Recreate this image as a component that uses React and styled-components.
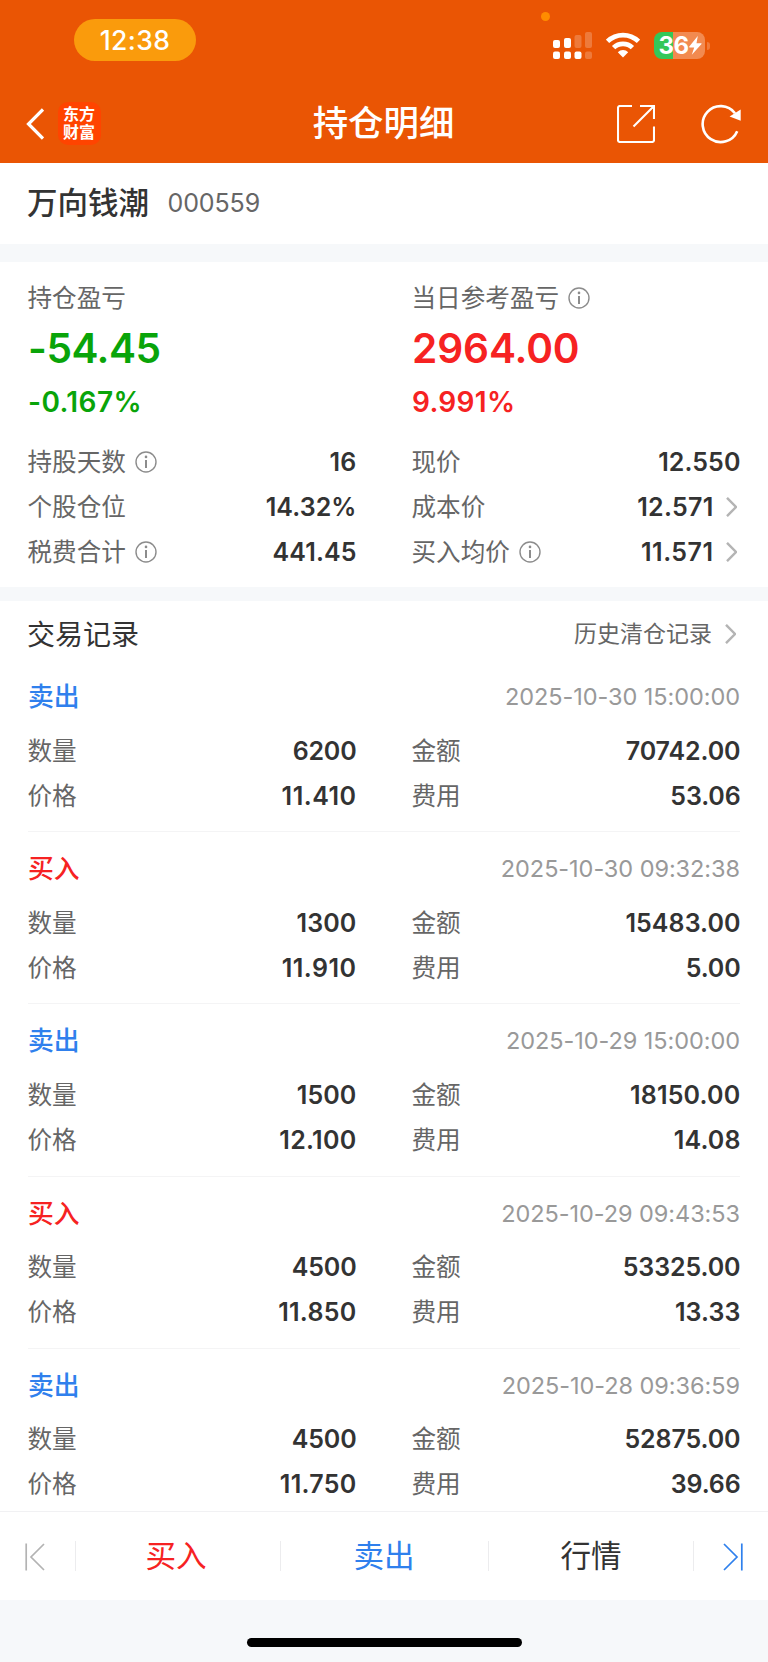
import React from "react";
import styled, { createGlobalStyle } from "styled-components";

const CJK = `"Noto Sans CJK SC", sans-serif`;
const NUM = `Inter, "Noto Sans CJK SC", sans-serif`;
const c = {
  brand: "#ea5504", text: "#333333", sub: "#666666", faint: "#999999",
  up: "#f62222", down: "#09a409", blue: "#2f80ed", gap: "#f6f8fa", line: "#f4f4f5",
};

const Global = createGlobalStyle`
  * { box-sizing: border-box; }
  body { margin: 0; background: #fff; }
  svg { display: block; flex: none; }
`;

const Screen = styled.div`
  width: 768px;
  height: 1662px;
  display: flex;
  flex-direction: column;
  overflow: hidden;
  background: #fff;
  color: ${c.text};
  font-family: ${CJK};
`;

const Header = styled.header`
  flex: none;
  height: 163px;
  background: ${c.brand};
  color: #fff;
`;

const StatusBar = styled.div`
  position: relative;
  height: 84px;
  padding: 19px 58px 0 74px;
  display: flex;
  justify-content: space-between;
`;

const TimePill = styled.div`
  width: 122px;
  height: 42px;
  border-radius: 21px;
  background: #fa9b0c;
  text-align: center;
  font: 500 26.5px/43px ${NUM};
  letter-spacing: 0.4px;
`;

const MicDot = styled.i`
  position: absolute;
  left: 541px;
  top: 12px;
  width: 9px;
  height: 9px;
  border-radius: 50%;
  background: #ff8c00;
`;

const StatusIcons = styled.div`
  display: flex;
  padding-top: 13px;
`;

const Battery = styled.div`
  width: 51px;
  height: 27px;
  margin-left: 14px;
  border-radius: 8px;
  background: linear-gradient(to right, #34c759 18.5px, #f28a50 18.5px);
  display: flex;
  align-items: center;
  padding-left: 4.5px;
  font: 700 24px/27px ${NUM};
  letter-spacing: -0.4px;
`;

const BatteryTip = styled.i`
  width: 3px;
  height: 8px;
  margin: 10px 0 0 2px;
  border-radius: 0 4px 4px 0;
  background: #f07a3a;
`;

const NavBar = styled.nav`
  height: 79px;
  display: grid;
  grid-template-columns: 1fr auto 1fr;
  align-items: center;
  padding: 0 27px 0 26px;
`;

const NavSide = styled.div`
  display: flex;
  align-items: center;
  justify-content: ${(p) => (p.$end ? "flex-end" : "flex-start")};
  gap: ${(p) => (p.$end ? "46px" : "14px")};
`;

const Title = styled.h1`
  margin: 0;
  padding-bottom: 5px;
  font: 500 35.4px/48px ${CJK};
`;

const Logo = styled.div`
  width: 43px;
  height: 43px;
  border-radius: 10px;
  background: #ff4400;
  padding: 3px 0 0 5px;
  font: 700 16px/17.5px ${CJK};
`;

const StockRow = styled.section`
  flex: none;
  height: 81px;
  display: flex;
  align-items: center;
  padding: 0 28px 2px 27px;
  gap: 18.5px;
`;

const StockName = styled.h2`
  margin: 0;
  padding-bottom: 3px;
  font: 500 30.5px/40px ${CJK};
`;

const StockCode = styled.span`
  font: 400 25px/40px ${NUM};
  letter-spacing: -0.1px;
  color: ${c.sub};
`;

const Band = styled.div`
  flex: none;
  height: ${(p) => p.$h}px;
  background: ${c.gap};
`;

const Columns = styled.div`
  display: grid;
  grid-template-columns: 328.5px 328.5px;
  column-gap: 55.5px;
  padding: 0 28px;
`;

const Summary = styled.section`
  flex: none;
  height: 325px;
  padding-top: 16px;
`;

const Label = styled.span`
  display: flex;
  align-items: center;
  gap: 9px;
  margin-left: -0.5px;
  font: 400 24.6px/36px ${CJK};
  color: ${c.sub};
`;

const LabelText = styled.span`
  padding-bottom: 4px;
`;

const Profit = styled.div`
  font: 600 ${(p) => (p.$big ? "40.6px/62px" : "28px/44px")} ${NUM};
  letter-spacing: ${(p) => p.$ls || 0}px;
  color: ${(p) => p.$color};
`;

const Row = styled.div`
  height: 45px;
  display: flex;
  align-items: center;
  justify-content: space-between;
`;

const Details = styled(Columns)`
  padding-top: 15px;
`;

const Value = styled.span`
  display: flex;
  align-items: center;
  gap: 12px;
  padding-right: ${(p) => (p.$link ? "4px" : 0)};
  font: 600 25px/40px ${NUM};
  letter-spacing: ${(p) => p.$ls}px;
  color: ${c.text};
`;

const Trades = styled.section`
  flex: none;
  height: 910px;
  overflow: hidden;
`;

const TradesHead = styled.div`
  height: 59px;
  display: flex;
  align-items: center;
  justify-content: space-between;
  padding: 6px 32px 0 27px;
`;

const TradesTitle = styled.h3`
  margin: 0;
  padding-bottom: 2px;
  font: 400 28px/40px ${CJK};
`;

const HistoryLink = styled.a`
  display: flex;
  align-items: center;
  gap: 13px;
  font: 400 23px/36px ${CJK};
  color: ${c.sub};
`;

const Trade = styled.article`
  height: 172.2px;
  margin: 0 28px;
  border-bottom: 1px solid ${c.line};
  padding-top: 12px;
`;

const TradeHead = styled.div`
  height: 56px;
  display: flex;
  justify-content: space-between;
`;

const TradeGrid = styled(Columns)`
  padding: 0;
`;

const Side = styled.span`
  font: 500 25.8px/46px ${CJK};
  color: ${(p) => p.$color};
`;

const Stamp = styled.time`
  font: 400 23.5px/50px ${NUM};
  letter-spacing: -0.06px;
  color: ${c.faint};
`;

const BottomBar = styled.footer`
  flex: none;
  height: 89px;
  border-top: 1px solid #f1f1f3;
  display: flex;
  align-items: center;
`;

const Edge = styled.button`
  flex: none;
  width: ${(p) => (p.$end ? "74px" : "75px")};
  height: 30px;
  padding: 1px 0 0 ${(p) => (p.$end ? "29px" : "25px")};
  border: 0;
  background: none;
  color: ${(p) => p.$color};
`;

const Action = styled.button`
  flex: none;
  width: ${(p) => p.$w}px;
  height: 30px;
  padding: 0 ${(p) => p.$shift || 0}px 0 0;
  border: 0;
  border-left: 1px solid #ececee;
  border-right: ${(p) => (p.$last ? "1px solid #ececee" : 0)};
  background: none;
  font: 400 30.6px/30px ${CJK};
  color: ${(p) => p.$color};
`;

const ActionText = styled.span`
  display: block;
  padding-bottom: 4px;
  line-height: 26px;
`;

const HomeArea = styled.div`
  flex: 1;
  background: ${c.gap};
  display: flex;
  justify-content: center;
  padding-top: 38px;
`;

const HomeIndicator = styled.div`
  width: 275px;
  height: 9px;
  border-radius: 5px;
  background: #000;
`;

const Info = () => (
  <svg width="22" height="22" viewBox="0 0 22 22" fill="none" stroke="#8c8c8c">
    <circle cx="11" cy="11" r="10" strokeWidth="1.4" />
    <path d="M11 9v8" strokeWidth="2" />
    <circle cx="11" cy="5.9" r="1.3" fill="#8c8c8c" stroke="none" />
  </svg>
);

const Chevron = () => (
  <svg width="11" height="20" viewBox="0 0 11 20" fill="none" stroke="#b4b4b4" strokeWidth="2.4">
    <path d="M1 .8 10 10 1 19.2" />
  </svg>
);

const Signal = () => (
  <svg width="39" height="27" viewBox="0 0 39 27" fill="#fff">
    <rect x="0" y="8" width="7" height="8" rx="2" />
    <rect x="11" y="6" width="7" height="10" rx="2" />
    <rect x="21.5" y="3" width="7" height="13" rx="2" opacity=".22" />
    <rect x="32" y="0" width="7" height="16" rx="2" opacity=".22" />
    <rect x="0" y="19.5" width="7" height="7.5" rx="2" />
    <rect x="11" y="19.5" width="7" height="7.5" rx="2" />
    <rect x="21.5" y="19.5" width="7" height="7.5" rx="2" />
    <rect x="32" y="19.5" width="7" height="7.5" rx="2" opacity=".22" />
  </svg>
);

const WifiIcon = styled.svg`
  margin-left: 14px;
`;

const Wifi = () => (
  <WifiIcon width="34" height="26" viewBox="0 0 34 26" fill="none" stroke="#fff" strokeWidth="4.8">
    <path d="M1.5 9.4a22.2 22.2 0 0 1 31 0" />
    <path d="M7.6 15.6a13.5 13.5 0 0 1 18.8 0" />
    <path d="M17 25.4 11.8 20.2a7.4 7.4 0 0 1 10.4 0z" fill="#fff" stroke="none" />
  </WifiIcon>
);

const Bolt = () => (
  <svg width="13" height="19" viewBox="0 0 13 19" fill="#fff">
    <path d="M8.8 0 .3 10.6c-.4.5-.1.9.4.9h4.5L2.8 18.8 12.3 8.2c.5-.6.2-1-.4-1H7.5z" />
  </svg>
);

const Back = () => (
  <svg width="18" height="32" viewBox="0 0 18 32" fill="none" stroke="#fff" strokeWidth="3.2">
    <path d="M17 1.5 2.5 16 17 30.5" />
  </svg>
);

const Share = () => (
  <svg width="38" height="38" viewBox="0 0 38 38" fill="none" stroke="#fff" strokeWidth="2.1">
    <path d="M15 1H3a2 2 0 0 0-2 2v32a2 2 0 0 0 2 2h32a2 2 0 0 0 2-2V21.5" />
    <path d="M23 1h14v13M37 1 16.5 21.5" />
  </svg>
);

const Refresh = () => (
  <svg width="40" height="40" viewBox="0 0 40 40" fill="none" stroke="#fff" strokeWidth="2.6">
    <path d="M36.2 27.2A18 18 0 1 1 34 9.2" />
    <path d="M39.7 5.5v11.3L28.6 12.6z" fill="#fff" stroke="none" />
  </svg>
);

const First = () => (
  <svg width="20" height="28" viewBox="0 0 20 28" fill="none" stroke="currentColor" strokeWidth="1.7">
    <path d="M1.2 .5v27M19 1 6 14l13 13" />
  </svg>
);

const Last = () => (
  <svg width="20" height="28" viewBox="0 0 20 28" fill="none" stroke="currentColor" strokeWidth="1.7">
    <path d="M18.8 .5v27M1 1l13 13L1 27" />
  </svg>
);

const stats = [
  ["持股天数", "16", true], ["现价", "12.550"],
  ["个股仓位", "14.32%"], ["成本价", "12.571", false, true],
  ["税费合计", "441.45", true], ["买入均价", "11.571", true, true],
];

const trades = [
  ["卖出", "2025-10-30 15:00:00", "6200", "70742.00", "11.410", "53.06"],
  ["买入", "2025-10-30 09:32:38", "1300", "15483.00", "11.910", "5.00"],
  ["卖出", "2025-10-29 15:00:00", "1500", "18150.00", "12.100", "14.08"],
  ["买入", "2025-10-29 09:43:53", "4500", "53325.00", "11.850", "13.33"],
  ["卖出", "2025-10-28 09:36:59", "4500", "52875.00", "11.750", "39.66"],
];

// Inter's "1" is narrow, so figures with several of them are tracked out a little.
const tracking = (value) => {
  const ones = value.split("1").length - 1;
  return Number(((ones * 1.2 - 0.7) / value.length).toFixed(2));
};

const Stat = ({ label, value, info, link }) => (
  <Row>
    <Label><LabelText>{label}</LabelText>{info && <Info />}</Label>
    <Value $link={link} $ls={tracking(value)}>{value}{link && <Chevron />}</Value>
  </Row>
);

export default function App() {
  return (
    <Screen>
      <Global />
      <Header>
        <StatusBar>
          <TimePill>12:38</TimePill>
          <MicDot />
          <StatusIcons>
            <Signal />
            <Wifi />
            <Battery>36<Bolt /></Battery>
            <BatteryTip />
          </StatusIcons>
        </StatusBar>
        <NavBar>
          <NavSide>
            <Back />
            <Logo>东方<br />财富</Logo>
          </NavSide>
          <Title>持仓明细</Title>
          <NavSide $end>
            <Share />
            <Refresh />
          </NavSide>
        </NavBar>
      </Header>
      <StockRow>
        <StockName>万向钱潮</StockName>
        <StockCode>000559</StockCode>
      </StockRow>
      <Band $h={18} />
      <Summary>
        <Columns>
          <div>
            <Label><LabelText>持仓盈亏</LabelText></Label>
            <Profit $big $ls={-0.5} $color={c.down}>-54.45</Profit>
            <Profit $ls={0.4} $color={c.down}>-0.167%</Profit>
          </div>
          <div>
            <Label><LabelText>当日参考盈亏</LabelText><Info /></Label>
            <Profit $big $ls={-0.1} $color={c.up}>2964.00</Profit>
            <Profit $ls={0.3} $color={c.up}>9.991%</Profit>
          </div>
        </Columns>
        <Details>
          {stats.map(([label, value, info, link]) => (
            <Stat key={label} label={label} value={value} info={info} link={link} />
          ))}
        </Details>
      </Summary>
      <Band $h={14} />
      <Trades>
        <TradesHead>
          <TradesTitle>交易记录</TradesTitle>
          <HistoryLink><LabelText>历史清仓记录</LabelText><Chevron /></HistoryLink>
        </TradesHead>
        {trades.map(([side, time, qty, amount, price, fee]) => (
          <Trade key={time}>
            <TradeHead>
              <Side $color={side === "买入" ? c.up : c.blue}>{side}</Side>
              <Stamp>{time}</Stamp>
            </TradeHead>
            <TradeGrid>
              <Stat label="数量" value={qty} />
              <Stat label="金额" value={amount} />
              <Stat label="价格" value={price} />
              <Stat label="费用" value={fee} />
            </TradeGrid>
          </Trade>
        ))}
      </Trades>
      <BottomBar>
        <Edge $color="#b3b3b3"><First /></Edge>
        <Action $w={205} $color={c.up} $shift={4}><ActionText>买入</ActionText></Action>
        <Action $w={208} $color={c.blue} $shift={1}><ActionText>卖出</ActionText></Action>
        <Action $w={206} $color={c.text} $last><ActionText>行情</ActionText></Action>
        <Edge $end $color={c.blue}><Last /></Edge>
      </BottomBar>
      <HomeArea><HomeIndicator /></HomeArea>
    </Screen>
  );
}
